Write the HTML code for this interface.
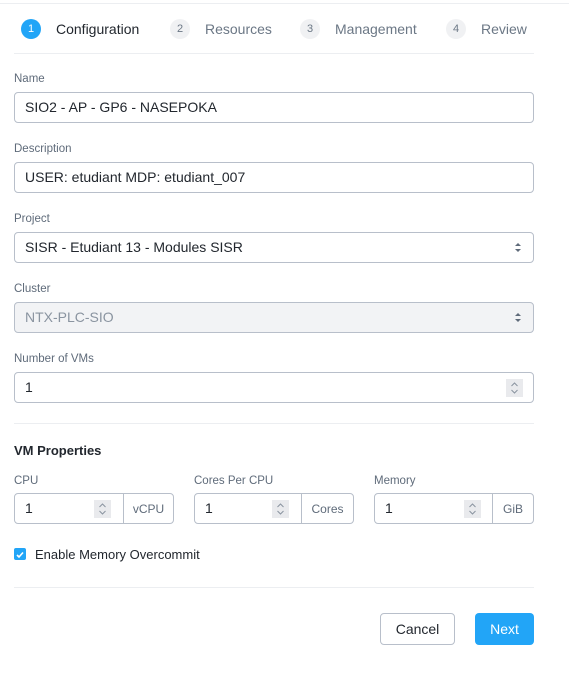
<!DOCTYPE html>
<html><head><meta charset="utf-8"><style>
*{box-sizing:border-box;margin:0;padding:0}
body{width:569px;height:682px;background:#fff;font-family:"Liberation Sans",sans-serif;position:relative;overflow:hidden;color:#22272e}
.a{position:absolute}
.top{left:0;top:3px;width:569px;height:1px;background:#eceef1}
.hr{left:14px;width:520px;height:1px;background:#eceef1}
.circ{width:20px;height:20px;border-radius:50%;background:#f0f1f3;color:#6b7785;font-size:11px;text-align:center;line-height:20px}
.st{font-size:14px;color:#6b7785}
.lbl{font-size:11.5px;color:#5f6b7a}
.in{border:1px solid #b8bfca;border-radius:4px;height:31px;font-size:14px;line-height:29px;padding-left:10px;background:#fff}
.sel::after{content:"";position:absolute;right:12px;top:10px;width:0;height:0;border-left:3px solid transparent;border-right:3px solid transparent;border-bottom:3.5px solid #5f6b7a}
.sel::before{content:"";position:absolute;right:12px;top:16px;width:0;height:0;border-left:3px solid transparent;border-right:3px solid transparent;border-top:3.5px solid #5f6b7a}
.spin{position:absolute;width:17px;height:18px;background:#e9eaed;top:6px}
.spin svg{display:block}
.unit{position:absolute;top:0;bottom:0;border-left:1px solid #b8bfca;font-size:12px;color:#5f6b7a;text-align:center;line-height:30px}
.btn{height:32px;border-radius:4px;font-size:14px;text-align:center;line-height:30px}
</style></head><body>
<div class="a top"></div>
<div class="a circ" style="left:21px;top:19px;background:#22a5f7;color:#fff">1</div>
<div class="a st" style="left:56px;top:21px;color:#22272e">Configuration</div>
<div class="a circ" style="left:170px;top:19px">2</div>
<div class="a st" style="left:205px;top:21px">Resources</div>
<div class="a circ" style="left:300px;top:19px">3</div>
<div class="a st" style="left:335px;top:21px">Management</div>
<div class="a circ" style="left:446px;top:19px">4</div>
<div class="a st" style="left:481px;top:21px">Review</div>
<div class="a hr" style="top:53px"></div>

<div class="a lbl" style="left:14px;top:73px">Name</div>
<div class="a in" style="left:14px;top:92px;width:520px">SIO2 - AP - GP6 - NASEPOKA</div>
<div class="a lbl" style="left:14px;top:143px">Description</div>
<div class="a in" style="left:14px;top:162px;width:520px">USER: etudiant MDP: etudiant_007</div>
<div class="a lbl" style="left:14px;top:213px">Project</div>
<div class="a in sel" style="left:14px;top:232px;width:520px">SISR - Etudiant 13 - Modules SISR</div>
<div class="a lbl" style="left:14px;top:283px">Cluster</div>
<div class="a in sel" style="left:14px;top:302px;width:520px;background:#f2f3f5;color:#8a94a0">NTX-PLC-SIO</div>
<div class="a lbl" style="left:14px;top:353px">Number of VMs</div>
<div class="a in" style="left:14px;top:372px;width:520px">1<div class="spin" style="right:10px"><svg width="17" height="18"><path d="M5.5 7l3-3 3 3M5.5 11l3 3 3-3" stroke="#8a94a0" fill="none" stroke-width="1"/></svg></div></div>
<div class="a hr" style="top:423px"></div>

<div class="a" style="left:14px;top:443px;font-size:13px;font-weight:bold">VM Properties</div>
<div class="a lbl" style="left:14px;top:475px">CPU</div>
<div class="a lbl" style="left:194px;top:475px">Cores Per CPU</div>
<div class="a lbl" style="left:374px;top:475px">Memory</div>
<div class="a in" style="left:14px;top:493px;width:160px">1<div class="spin" style="left:79px"><svg width="17" height="18"><path d="M5.5 7l3-3 3 3M5.5 11l3 3 3-3" stroke="#8a94a0" fill="none"/></svg></div><div class="unit" style="left:108px;right:0">vCPU</div></div>
<div class="a in" style="left:194px;top:493px;width:160px">1<div class="spin" style="left:77px"><svg width="17" height="18"><path d="M5.5 7l3-3 3 3M5.5 11l3 3 3-3" stroke="#8a94a0" fill="none"/></svg></div><div class="unit" style="left:106px;right:0">Cores</div></div>
<div class="a in" style="left:374px;top:493px;width:160px">1<div class="spin" style="left:89px"><svg width="17" height="18"><path d="M5.5 7l3-3 3 3M5.5 11l3 3 3-3" stroke="#8a94a0" fill="none"/></svg></div><div class="unit" style="left:117px;right:0">GiB</div></div>

<div class="a" style="left:14px;top:548px;width:12px;height:12px;border-radius:2px;background:#22a5f7"><svg width="12" height="12"><path d="M3 6l2 2 4-4.5" stroke="#fff" stroke-width="1.6" fill="none"/></svg></div>
<div class="a" style="left:35px;top:547px;font-size:13px">Enable Memory Overcommit</div>
<div class="a hr" style="top:587px"></div>

<div class="a btn" style="left:380px;top:613px;width:75px;border:1px solid #b8bfca">Cancel</div>
<div class="a btn" style="left:475px;top:613px;width:59px;background:#22a5f7;color:#fff;line-height:32px">Next</div>
</body></html>
